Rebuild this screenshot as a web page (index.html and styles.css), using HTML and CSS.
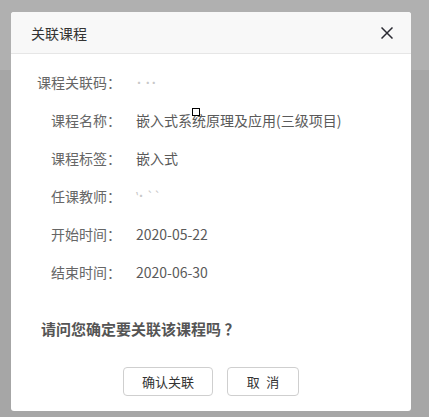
FILE: index.html
```html
<!DOCTYPE html>
<html lang="zh-CN">
<head>
    <meta charset="UTF-8">
    <meta name="viewport" content="width=device-width, initial-scale=1.0">
    <title>关联课程</title>
    <link rel="stylesheet" href="styles.css">
</head>
<body>
    <div class="dialog">
        <div class="dialog-header">
            <span class="dialog-title">关联课程</span>
            <svg class="close" width="12" height="12" viewBox="0 0 12 12">
                <path d="M0.5 0.5 L11.5 11.5 M11.5 0.5 L0.5 11.5" stroke="#2b2b33" stroke-width="1.5" fill="none"/>
            </svg>
        </div>
        <div class="dialog-body">
            <div class="row">
                <span class="label">课程关联码：</span>
                <span class="value faint">&#729; &#729;&#729;</span>
            </div>
            <div class="row">
                <span class="label">课程名称：</span>
                <span class="value">嵌入式系统原理及应用(三级项目)</span>
            </div>
            <div class="row">
                <span class="label">课程标签：</span>
                <span class="value">嵌入式</span>
            </div>
            <div class="row">
                <span class="label">任课教师：</span>
                <span class="value faint">&#8219;&#729; &#96;&#96;</span>
            </div>
            <div class="row">
                <span class="label">开始时间：</span>
                <span class="value">2020-05-22</span>
            </div>
            <div class="row">
                <span class="label">结束时间：</span>
                <span class="value">2020-06-30</span>
            </div>
            <p class="question">请问您确定要关联该课程吗 ？</p>
        </div>
        <div class="dialog-footer">
            <button class="btn btn-wide">确认关联</button>
            <button class="btn">取&ensp;消</button>
        </div>
        <span class="cursor"></span>
    </div>
</body>
</html>
```

FILE: styles.css
```css
body {
    margin: 0;
    height: 417px;
    overflow: hidden;
    font-family: "Noto Sans CJK SC", "Noto Sans", sans-serif;
    background: linear-gradient(#b0b0b0 0, #b0b0b0 70px, #a6a6a6 70px);
    padding: 12px 18px 0 11px;
    box-sizing: border-box;
}
.dialog {
    position: relative;
    width: 400px;
    height: 399px;
    background: #fff;
    border-radius: 3px;
    display: flex;
    flex-direction: column;
}
.dialog-header {
    height: 41px;
    background: #f8f8f8;
    border-bottom: 1px solid #e6e6e6;
    border-radius: 3px 3px 0 0;
    display: flex;
    align-items: center;
    justify-content: space-between;
    padding: 0 18px 0 20px;
}
.dialog-title {
    font-size: 14px;
    color: #333;
}
.dialog-body {
    flex: 1;
    padding-top: 9px;
}
.row {
    display: flex;
    height: 38px;
    align-items: center;
    font-size: 14px;
    color: #666;
}
.label {
    width: 110px;
    text-align: right;
}
.value {
    margin-left: 15px;
    color: #5a5a5a;
}
.faint {
    color: #c8c8c8;
    font-size: 12px;
}
.question {
    margin: 27px 0 0 30px;
    font-size: 15px;
    font-weight: bold;
    color: #555;
}
.dialog-footer {
    display: flex;
    justify-content: center;
    gap: 14px;
    padding-bottom: 15px;
}
.btn {
    width: 72px;
    height: 29px;
    border: 1px solid #cfcfcf;
    border-radius: 4px;
    background: #fff;
    font-family: inherit;
    font-size: 13px;
    color: #333;
    padding: 0;
}
.btn-wide {
    width: 90px;
}
.cursor {
    position: absolute;
    left: 181px;
    top: 96px;
    width: 6px;
    height: 6px;
    border: 1px solid #000;
    background: #fff;
}
```
